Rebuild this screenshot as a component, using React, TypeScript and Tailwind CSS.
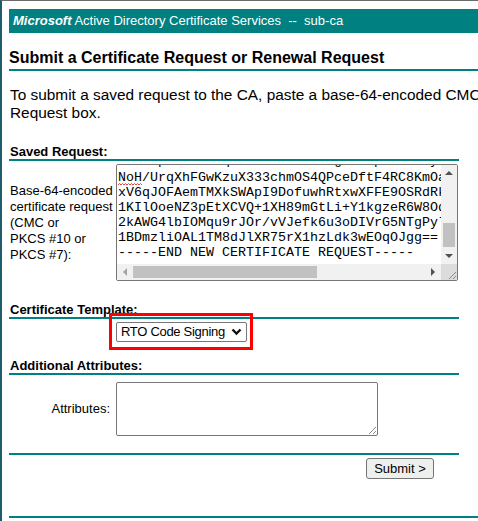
import React from 'react';

const teal = 'bg-[#008080]';

const hiddenLine = 'SHuKRpWoLMXtNqZBc7nHeS3rUFagvE5NpI0wTmKyhBtR2xW8DkZaLmN4eIuX0sV1';

const requestLines = [
  'NoH/UrqXhFGwKzuX333chmOS4QPceDftF4RC8KmOa7Lx2Wv9TfBn1kE5hYcs0RdM',
  'xV6qJOFAemTMXkSWApI9DofuwhRtxwXFFE9OSRdRk3Vb2nH8sLq0ZyTa6cWm4eJx',
  '1KIlOoeNZ3pEtXCVQ+1XH89mGtLi+Y1kgzeR6W8Oq2fTnL7bVd0sHaXe4rMc9uPk',
  '2kAWG4lbIOMqu9rJOr/vVJefk6u3oDIVrG5NTgPylR8wQxZc1hLm0sKa7TdEe3Fn',
  '1BDmzliOAL1TM8dJlXR75rX1hzLdk3wEOqOJgg==',
  '-----END NEW CERTIFICATE REQUEST-----',
];

const Arrow = ({ dir, light }: { dir: 'up' | 'down' | 'left' | 'right'; light?: boolean }) => {
  const pts = {
    up: '0,5 4,1 8,5',
    down: '0,1 4,5 8,1',
    left: '5,0 1,4 5,8',
    right: '1,0 5,4 1,8',
  }[dir];
  const vertical = dir === 'up' || dir === 'down';
  return (
    <svg width={vertical ? 8 : 6} height={vertical ? 6 : 8} viewBox={vertical ? '0 0 8 6' : '0 0 6 8'}>
      <polygon points={pts} fill={light ? '#a3a3a3' : '#505050'} />
    </svg>
  );
};

const Grip = () => (
  <svg width="10" height="10" viewBox="0 0 10 10">
    <line x1="9" y1="2" x2="2" y2="9" stroke="#8a8a8a" strokeWidth="1" />
    <line x1="9" y1="6" x2="6" y2="9" stroke="#8a8a8a" strokeWidth="1" />
  </svg>
);

const SectionTitle = ({ children, className = '' }: { children: React.ReactNode; className?: string }) => (
  <div className={`w-[450px] text-[13px] leading-[15px] font-bold border-b-2 border-[#008080] ${className}`}>
    {children}
  </div>
);

// spell-check squiggle under the first word
const Squiggle = ({ children }: { children: React.ReactNode }) => (
  <span className="relative">
    {children}
    <svg className="absolute left-0 top-[13px]" width="24" height="3" viewBox="0 0 24 3">
      <polyline
        points="0,2 1.5,0.5 3,2 4.5,0.5 6,2 7.5,0.5 9,2 10.5,0.5 12,2 13.5,0.5 15,2 16.5,0.5 18,2 19.5,0.5 21,2 22.5,0.5 24,2"
        fill="none"
        stroke="#e03030"
        strokeWidth="0.9"
      />
    </svg>
  </span>
);

const RequestBox = () => (
  <div className="w-[342px] h-[117px] border border-[#767676] rounded-[2px] grid grid-cols-[1fr_16px] grid-rows-[1fr_16px] bg-white">
    <div className="overflow-hidden pl-[1px] font-['Liberation_Mono','Courier_New',monospace] text-[13.33px] leading-[15px] whitespace-pre">
      {/* only the descenders of the line above are still in view */}
      <div className="h-[3px] overflow-hidden">
        <div className="-mt-[12px]">{hiddenLine}</div>
      </div>
      <div className="mt-[2px]">
        {requestLines.map((line, i) =>
          i === 0 ? (
            <div key={i}>
              <Squiggle>NoH</Squiggle>
              {line.slice(3)}
            </div>
          ) : (
            <div key={i}>{line}</div>
          )
        )}
      </div>
    </div>
    {/* vertical scrollbar */}
    <div className="bg-[#f1f1f1] flex flex-col">
      <div className="h-[16px] flex items-center justify-center">
        <Arrow dir="up" />
      </div>
      <div className="flex-1 flex flex-col justify-end pb-[1px] items-center">
        <div className="w-[12px] h-[24px] bg-[#c1c1c1]" />
      </div>
      <div className="h-[16px] flex items-center justify-center">
        <Arrow dir="down" />
      </div>
    </div>
    {/* horizontal scrollbar */}
    <div className="bg-[#f1f1f1] flex items-center">
      <div className="w-[16px] h-full flex items-center justify-center">
        <Arrow dir="left" light />
      </div>
      <div className="flex-1 h-full flex items-center">
        <div className="w-[184px] h-[12px] bg-[#c1c1c1]" />
      </div>
      <div className="w-[16px] h-full flex items-center justify-center">
        <Arrow dir="right" />
      </div>
    </div>
    <div className="bg-[#dcdcdc] flex items-end justify-end">
      <Grip />
    </div>
  </div>
);

export default function App() {
  return (
    <div className="w-[478px] h-[521px] overflow-hidden bg-white border-t border-[#6b6b6b] border-l-2 border-l-[#1f5c69] font-['Liberation_Sans',Arial,sans-serif] text-black">
      <div className="pl-[7px] pt-2 w-[900px]">
        {/* banner */}
        <div className={`h-6 ${teal} text-white text-[13px] flex items-center pl-1 whitespace-pre`}>
          <span className="font-bold italic">Microsoft</span>
          <span> Active Directory Certificate Services  --  sub-ca</span>
        </div>

        <div className="mt-[15px] text-[16px] leading-[19px] font-bold pb-[2px] border-b-2 border-[#008080]">
          Submit a Certificate Request or Renewal Request
        </div>

        <p className="mt-[15px] text-[15.4px] leading-[18px] whitespace-nowrap pl-[1px]">
          To submit a saved request to the CA, paste a base-64-encoded CMC or PKCS #10 certificate request or PKCS #7 renewal request generated by an external source (such as a Web server) in the Saved
          <br />
          Request box.
        </p>

        <SectionTitle className="mt-[22px] pl-[1px]">Saved Request:</SectionTitle>
        <div className="mt-[3px] flex items-center">
          <div className="w-[107px] text-[13px] leading-[16px] pl-[1px]">
            Base-64-encoded
            <br />
            certificate request
            <br />
            (CMC or
            <br />
            PKCS #10 or
            <br />
            PKCS #7):
          </div>
          <RequestBox />
        </div>

        <SectionTitle className="mt-[21px] pl-[1px]">Certificate Template:</SectionTitle>
        <div className="mt-[3px] flex">
          <div className="w-[107px]" />
          <div className="relative">
            <div className="w-[131px] h-5 border border-[#767676] rounded-[2px] bg-white flex items-center justify-between pl-[4px] pr-[4px] text-[13px] tracking-[-0.3px]">
              <span>RTO Code Signing</span>
              <svg width="11" height="8" viewBox="0 0 11 8">
                <polyline points="1.5,1.5 5.5,5.5 9.5,1.5" fill="none" stroke="#111" strokeWidth="2.4" />
              </svg>
            </div>
            <div className="absolute left-[-7px] top-[-9px] w-[144px] h-[37px] border-[3px] border-[#ff0000]" />
          </div>
        </div>

        <SectionTitle className="mt-[16px] pl-[1px]">Additional Attributes:</SectionTitle>
        <div className="mt-[7px] flex items-center w-[450px]">
          <div className="w-[107px] text-right pr-[6px] text-[13px]">Attributes:</div>
          <div className="w-[262px] h-[54px] border border-[#767676] rounded-[2px] bg-white flex items-end justify-end">
            <Grip />
          </div>
        </div>

        <div className={`mt-[17px] w-[450px] h-[2px] ${teal}`} />
        <div className="mt-[3px] w-[450px] flex justify-end pr-[25px]">
          <div className="w-[68px] h-[21px] border border-[#767676] rounded-[3px] bg-[#eef0ee] text-[13px] flex items-center justify-center">
            Submit &gt;
          </div>
        </div>

        <div className={`mt-[37px] h-[2px] ${teal}`} />
      </div>
    </div>
  );
}
